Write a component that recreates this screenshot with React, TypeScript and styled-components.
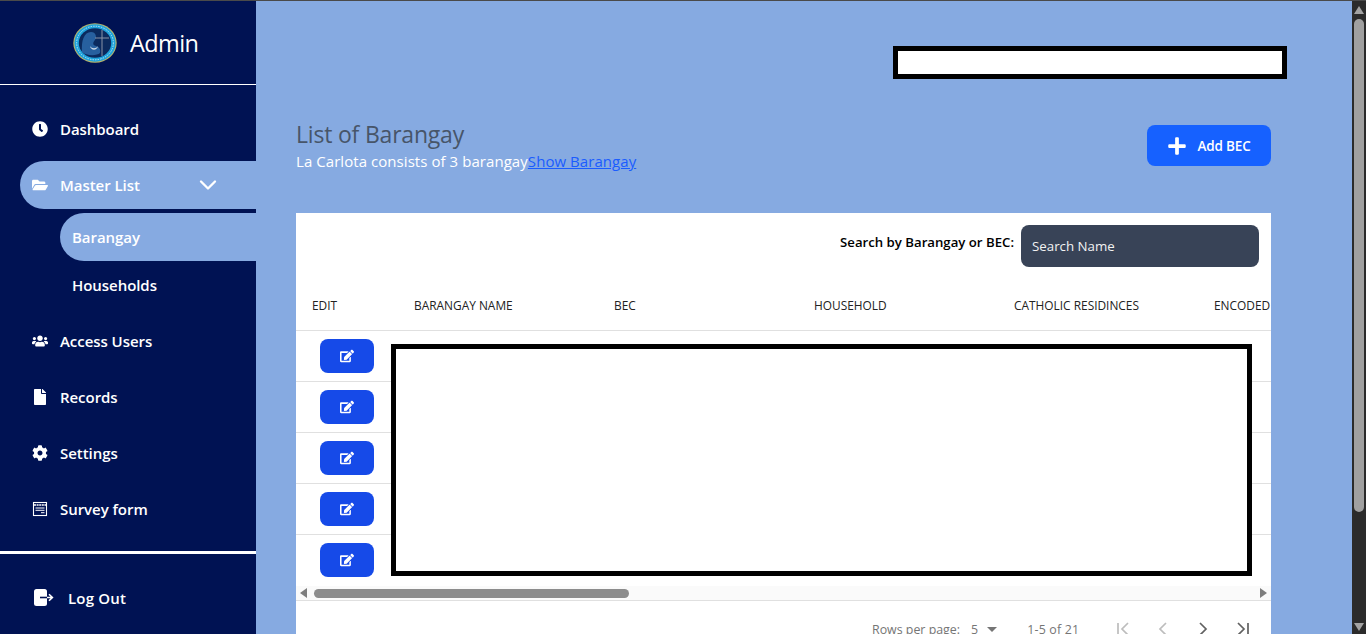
import styled, { createGlobalStyle } from "styled-components";
import {
  FaClock,
  FaFolderOpen,
  FaUsers,
  FaFile,
  FaCog,
  FaEdit,
  FaPlus,
} from "react-icons/fa";
import { FiChevronDown } from "react-icons/fi";

const GlobalStyle = createGlobalStyle`
  * { box-sizing: border-box; }
  html, body { margin: 0; padding: 0; height: 100%; overflow: hidden; }
  body { font-family: "Open Sans", "Noto Sans", sans-serif; background: #86aae1; }
`;

const Page = styled.div`
  display: flex;
  height: 634px;
  border-top: 1px solid #4a4a4a;
  overflow: hidden;
`;

const Sidebar = styled.aside`
  width: 256px;
  flex: none;
  background: #001253;
  color: #fff;
  display: flex;
  flex-direction: column;
`;

const Brand = styled.div`
  height: 84px;
  flex: none;
  border-bottom: 1px solid #fff;
  display: flex;
  align-items: center;
  padding: 0 0 0 73px;
  gap: 13px;
  font-size: 23.5px;
  letter-spacing: -0.6px;
`;

const Nav = styled.nav`
  display: flex;
  flex-direction: column;
  padding-top: 20px;
  gap: 8px;
  flex: none;
`;

const NavItem = styled.a<{ $active?: boolean }>`
  height: 48px;
  margin-left: 20px;
  padding-left: 12px;
  display: flex;
  align-items: center;
  font-size: 15px;
  font-weight: 600;
  letter-spacing: -0.05px;
  border-radius: 24px 0 0 24px;
  background: ${(p) => (p.$active ? "#86aae1" : "transparent")};
  svg.lead {
    width: 16px;
    height: 16px;
    margin-right: 12px;
    flex: none;
  }
  svg.caret {
    width: 28px;
    height: 28px;
    margin-left: auto;
    margin-right: 34px;
  }
`;

const SubList = styled.div`
  display: flex;
  flex-direction: column;
  margin-top: -4px;
`;

const SubItem = styled.a<{ $active?: boolean }>`
  height: 48px;
  margin-left: 60px;
  padding-left: 12px;
  display: flex;
  align-items: center;
  font-size: 15px;
  font-weight: 600;
  letter-spacing: -0.05px;
  border-radius: 24px 0 0 24px;
  background: ${(p) => (p.$active ? "#86aae1" : "transparent")};
`;

const Divider = styled.div`
  height: 3px;
  background: #fff;
  margin-top: 18px;
  flex: none;
`;

const LogOut = styled.a`
  display: flex;
  align-items: center;
  height: 88px;
  flex: none;
  padding-left: 34px;
  font-size: 15px;
  font-weight: 600;
  letter-spacing: 0.2px;
  gap: 14px;
  svg {
    width: 20px;
    height: 18px;
    flex: none;
  }
`;

const Main = styled.main`
  position: relative;
  flex: 1;
  min-width: 0;
  padding: 118px 81px 0 40px;
  overflow: hidden;
`;

const Redaction = styled.div`
  position: absolute;
  background: #fff;
  border: 5px solid #000;
`;

const TopRedaction = styled(Redaction)`
  top: 45px;
  left: 637px;
  width: 394px;
  height: 33px;
`;

const TableRedaction = styled(Redaction)`
  top: 343px;
  left: 135px;
  width: 861px;
  height: 232px;
`;

const Heading = styled.div`
  display: flex;
  justify-content: space-between;
  align-items: flex-start;
  height: 94px;
`;

const Title = styled.h1`
  margin: 0 0 2px;
  font-size: 23px;
  font-weight: 400;
  letter-spacing: -0.2px;
  line-height: 30px;
  color: #475569;
`;

const Subtitle = styled.p`
  margin: 0;
  font-size: 15px;
  letter-spacing: 0.06px;
  line-height: 20px;
  color: #fff;
  a {
    color: #1a5cff;
    text-decoration: underline;
  }
`;

const AddButton = styled.button`
  width: 124px;
  height: 41px;
  margin-top: 6px;
  border: 0;
  border-radius: 8px;
  background: #1661ff;
  color: #fff;
  font: 600 13.5px "Open Sans", sans-serif;
  letter-spacing: -0.15px;
  display: flex;
  align-items: center;
  justify-content: center;
  gap: 10px;
  svg {
    width: 20px;
    height: 20px;
  }
`;

const Card = styled.section`
  background: #fff;
  height: 500px;
`;

const SearchBar = styled.div`
  display: flex;
  justify-content: flex-end;
  align-items: flex-start;
  padding: 12px 12px 0 0;
  gap: 7px;
  height: 67px;
  label {
    font-size: 13.2px;
    font-weight: 600;
    color: #000;
    margin-top: 8px;
  }
`;

const SearchInput = styled.div`
  width: 238px;
  height: 42px;
  border-radius: 8px;
  background: #384357;
  color: #f2f2f2;
  font-size: 13.3px;
  padding-left: 11px;
  display: flex;
  align-items: center;
`;

const TableWrap = styled.div`
  overflow: hidden;
`;

const Table = styled.table`
  border-collapse: collapse;
  table-layout: fixed;
  width: 1102px;
  th {
    height: 50px;
    padding: 0 0 0 16px;
    text-align: left;
    font-size: 11.9px;
    font-weight: 500;
    color: #222;
    text-transform: uppercase;
    border-bottom: 1px solid #e0e0e0;
    width: 200px;
  }
  th:first-child {
    width: 102px;
  }
  td {
    height: 51px;
    padding: 0 0 0 24px;
    border-bottom: 1px solid #e0e0e0;
  }
  tr:last-child td {
    border-bottom: 0;
  }
`;

const EditButton = styled.button`
  width: 54px;
  height: 34px;
  border: 0;
  border-radius: 8px;
  background: #164ae8;
  color: #fff;
  display: flex;
  align-items: center;
  justify-content: center;
  svg {
    width: 14px;
    height: 14px;
  }
`;

const HScroll = styled.div`
  height: 15px;
  margin-top: 1px;
  background: #fafafa;
  border-bottom: 1px solid #e0e0e0;
  display: flex;
  align-items: center;
  justify-content: space-between;
  padding: 0 4px;
  svg {
    width: 8px;
    height: 10px;
    fill: #7d7d7d;
    flex: none;
  }
`;

const HThumb = styled.div`
  width: 315px;
  height: 9px;
  border-radius: 5px;
  background: #8c8c8c;
  margin: 0 auto 0 6px;
`;

const Pager = styled.div`
  display: flex;
  align-items: center;
  height: 56px;
  padding-left: 576px;
  font-size: 12.4px;
  color: #757575;
  white-space: nowrap;
`;

const RowsValue = styled.span`
  margin-left: 11px;
  display: flex;
  align-items: center;
  gap: 9px;
  svg {
    width: 10px;
    height: 5px;
    fill: #757575;
  }
`;

const Range = styled.span`
  margin-left: 30px;
  width: 78px;
  letter-spacing: 0.2px;
`;

const PageIcons = styled.div`
  display: flex;
  gap: 20px;
  margin-left: 8px;
`;

const PageIcon = styled.svg<{ $off?: boolean }>`
  width: 20px;
  height: 20px;
  fill: none;
  stroke: ${(p) => (p.$off ? "#bdbdbd" : "#616161")};
  stroke-width: 1.7;
`;

const WindowScroll = styled.div`
  width: 14px;
  flex: none;
  background: #2b2b2b;
  display: flex;
  flex-direction: column;
  align-items: center;
  padding: 5px 0 3px;
  svg {
    width: 10px;
    height: 8px;
    fill: #a3a3a3;
    flex: none;
  }
`;

const VThumb = styled.div`
  width: 10px;
  height: 493px;
  margin-top: 5px;
  margin-bottom: auto;
  border-radius: 5px;
  background: #a0a0a0;
`;

const Logo = () => (
  <svg width="44" height="40" viewBox="0 0 44 40" aria-hidden="true">
    <ellipse cx="22" cy="20" rx="21.7" ry="19.8" fill="#b9b46a" />
    <ellipse cx="22" cy="20" rx="20.6" ry="18.8" fill="#1fa3dc" />
    <ellipse cx="22" cy="20" rx="18.4" ry="16.8" fill="none" stroke="#bfe6f5" strokeWidth="1" strokeDasharray="1.4 1.2" />
    <ellipse cx="22" cy="20" rx="16.2" ry="14.8" fill="#0b2a5e" />
    <path d="M9 29C8 18 11 9 18 9c5 0 6 5 4 8-2 2-3 5 1 6 3 1 5 3 4 7-3 3-14 3-18-1z" fill="#27609f" />
    <path d="M17 23c2 3 6 3 8 0-1 5-7 5-8 0z" fill="#c9d6e6" />
    <path d="M29 7v26M22 15h14" stroke="#8a93a6" strokeWidth="1" fill="none" />
  </svg>
);

const SurveyIcon = () => (
  <svg className="lead" viewBox="0 0 16 16" fill="none" stroke="#fff" aria-hidden="true">
    <rect x="1.5" y="1.5" width="13" height="13" strokeWidth="1.1" />
    <path d="M2 4h12" strokeWidth="1.6" strokeDasharray="2 .6" />
    <path d="M3.5 7h9M3.5 9.3h9M9 11.7h3.5" strokeWidth="1" />
  </svg>
);

const LogOutIcon = () => (
  <svg viewBox="0 0 20 18" aria-hidden="true">
    <rect x="0" y="0" width="13" height="17" rx="2.5" fill="#fff" />
    <path d="M6 8.5h7" fill="none" stroke="#001253" strokeWidth="1.6" />
    <path d="M13 8.5h5M15 5.2l3.4 3.3-3.4 3.3" fill="none" stroke="#fff" strokeWidth="1.6" />
  </svg>
);

const columns = ["Edit", "Barangay Name", "BEC", "Household", "Catholic Residinces", "Encoded"];

export default function App() {
  return (
    <>
      <GlobalStyle />
      <Page>
        <Sidebar>
          <Brand>
            <Logo />
            Admin
          </Brand>
          <Nav>
            <NavItem>
              <FaClock className="lead" />
              Dashboard
            </NavItem>
            <NavItem $active>
              <FaFolderOpen className="lead" />
              Master List
              <FiChevronDown className="caret" />
            </NavItem>
            <SubList>
              <SubItem $active>Barangay</SubItem>
              <SubItem>Households</SubItem>
            </SubList>
            <NavItem>
              <FaUsers className="lead" />
              Access Users
            </NavItem>
            <NavItem>
              <FaFile className="lead" />
              Records
            </NavItem>
            <NavItem>
              <FaCog className="lead" />
              Settings
            </NavItem>
            <NavItem>
              <SurveyIcon />
              Survey form
            </NavItem>
          </Nav>
          <Divider />
          <LogOut>
            <LogOutIcon />
            Log Out
          </LogOut>
        </Sidebar>

        <Main>
          <TopRedaction />
          <Heading>
            <div>
              <Title>List of Barangay</Title>
              <Subtitle>
                La Carlota consists of 3 barangay<a>Show Barangay</a>
              </Subtitle>
            </div>
            <AddButton>
              <FaPlus />
              Add BEC
            </AddButton>
          </Heading>
          <Card>
            <SearchBar>
              <label>Search by Barangay or BEC:</label>
              <SearchInput>Search Name</SearchInput>
            </SearchBar>
            <TableWrap>
              <Table>
                <thead>
                  <tr>
                    {columns.map((c) => (
                      <th key={c}>{c}</th>
                    ))}
                  </tr>
                </thead>
                <tbody>
                  {[0, 1, 2, 3, 4].map((row) => (
                    <tr key={row}>
                      <td>
                        <EditButton>
                          <FaEdit />
                        </EditButton>
                      </td>
                      <td colSpan={5} />
                    </tr>
                  ))}
                </tbody>
              </Table>
            </TableWrap>
            <HScroll>
              <svg viewBox="0 0 8 10">
                <path d="M7 0v10L0 5z" />
              </svg>
              <HThumb />
              <svg viewBox="0 0 8 10">
                <path d="M1 0v10l7-5z" />
              </svg>
            </HScroll>
            <Pager>
              Rows per page:
              <RowsValue>
                5
                <svg viewBox="0 0 10 5">
                  <path d="M0 0h10L5 5z" />
                </svg>
              </RowsValue>
              <Range>1-5 of 21</Range>
              <PageIcons>
                <PageIcon $off viewBox="0 0 20 20">
                  <path d="M5 4v12M15 4l-6 6 6 6" />
                </PageIcon>
                <PageIcon $off viewBox="0 0 20 20">
                  <path d="M13 4l-6 6 6 6" />
                </PageIcon>
                <PageIcon viewBox="0 0 20 20">
                  <path d="M7 4l6 6-6 6" />
                </PageIcon>
                <PageIcon viewBox="0 0 20 20">
                  <path d="M5 4l6 6-6 6M15 4v12" />
                </PageIcon>
              </PageIcons>
            </Pager>
          </Card>
          <TableRedaction />
        </Main>

        <WindowScroll>
          <svg viewBox="0 0 10 8">
            <path d="M5 0l5 8H0z" />
          </svg>
          <VThumb />
          <svg viewBox="0 0 10 8">
            <path d="M0 0h10L5 8z" />
          </svg>
        </WindowScroll>
      </Page>
    </>
  );
}
